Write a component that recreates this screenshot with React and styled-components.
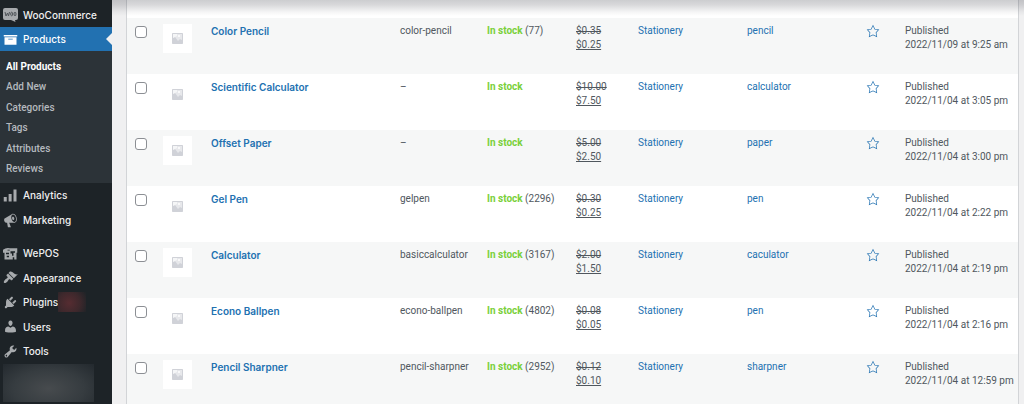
import React from "react";
import styled, { createGlobalStyle, css } from "styled-components";

const GlobalStyle = createGlobalStyle`
  *, *::before, *::after { box-sizing: border-box; }
  body {
    margin: 0;
    background: #f0f0f1;
    color: #50575e;
    font-family: Roboto, "Liberation Sans", sans-serif;
    font-size: 10px;
    line-height: 14px;
  }
  a { color: #2271b1; text-decoration: none; }
`;

const Page = styled.div`
  display: flex;
  height: 100vh;
  overflow: hidden;
`;

const Sidebar = styled.nav`
  flex: 0 0 112px;
  padding-top: 3px;
  background: #1d2327;
`;

const MenuGroup = styled.ul`
  display: flex;
  flex-direction: column;
  justify-content: space-between;
  min-height: ${(p) => p.$height}px;
  margin: 0 0 ${(p) => p.$after || 0}px;
  padding: 0;
  list-style: none;
`;

const MenuLink = styled.a`
  position: relative;
  display: flex;
  align-items: center;
  gap: 5px;
  height: 24px;
  padding-left: 3px;
  color: #f0f0f1;
  font-family: Inter, "Liberation Sans", sans-serif;
  font-size: 10px;
  font-weight: 500;
  white-space: nowrap;
  svg { flex: none; color: #a7aaad; }
  ${(p) =>
    p.$current &&
    css`
      background: #2271b1;
      color: #fff;
      svg { color: #fff; }
      &::after {
        content: "";
        position: absolute;
        top: 6px;
        right: 0;
        border: 6px solid transparent;
        border-left-width: 0;
        border-right-color: #f0f0f1;
      }
    `}
`;

const Submenu = styled.ul`
  display: flex;
  flex-direction: column;
  justify-content: space-between;
  min-height: 132px;
  margin: 0;
  padding: 6px 6px 4px;
  background: #2c3338;
  list-style: none;
`;

const SubLink = styled.a`
  display: block;
  color: ${(p) => (p.$current ? "#fff" : "#b4b9be")};
  font-weight: ${(p) => (p.$current ? 700 : 500)};
  line-height: 20px;
`;

const UpdateBadge = styled.span`
  width: 28px;
  height: 20px;
  margin-left: -5px;
  background: radial-gradient(circle at 40% 55%, #562c31, #3d282c 55%, #1d2327);
`;

const BlurredItem = styled.div`
  height: 38px;
  margin: 1px 18px 0 3px;
  background: radial-gradient(ellipse at 50% 65%, #474b4e, #363c40 55%, #23292e);
`;

const Main = styled.main`
  position: relative;
  flex: 1;
  min-width: 0;
  padding: 0 5px 0 14px;
`;

const TopShade = styled.div`
  position: absolute;
  inset: 0 0 auto;
  height: 16px;
  background: linear-gradient(rgba(60, 62, 72, 0.26), rgba(60, 62, 72, 0.2) 30%, rgba(60, 62, 72, 0.05) 75%, transparent);
`;

const ProductPanel = styled.div`
  min-height: 100%;
  padding-top: 18px;
  border: solid #d2d4d7;
  border-width: 0 1px;
  background: #fff;
`;

const ProductTable = styled.table`
  width: 100%;
  table-layout: fixed;
  border-collapse: collapse;
`;

const Col = styled.col`
  width: ${(p) => (p.$width ? `${p.$width}px` : "auto")};
`;

const Row = styled.tr`
  height: 56px;
  &:nth-child(odd) { background: #f6f7f7; }
`;

const Cell = styled.td`
  padding: ${(p) => p.$top || 6}px 0 0;
  vertical-align: top;
  white-space: nowrap;
`;

const Check = styled.input`
  appearance: none;
  display: block;
  width: 12px;
  height: 12px;
  margin: 0 0 0 8px;
  border: 1px solid #8c8f94;
  border-radius: 3px;
  background: #fff;
`;

const Thumb = styled.div`
  display: flex;
  align-items: center;
  justify-content: center;
  width: 29px;
  height: 29px;
  background: #fff;
  color: #d0d2d8;
`;

const ProductName = styled.a`
  font-family: Inter, "Liberation Sans", sans-serif;
  font-weight: 600;
`;

const Stock = styled.strong`
  color: #7ad03a;
  font-weight: 700;
`;

const Price = styled.div`
  display: flex;
  flex-direction: column;
  align-items: flex-start;
`;

const StarButton = styled.button`
  display: block;
  padding: 0;
  border: 0;
  background: none;
  color: #2271b1;
`;

const DashIcon = ({ d, size = 14 }) => (
  <svg width={size} height={size} viewBox="0 0 20 20" fill="currentColor" aria-hidden="true">
    <path d={d} fillRule="evenodd" />
  </svg>
);

const paths = {
  archive: "M19 4v2H1V4h18zM2 7h16v10H2V7zm11 3V9H7v1h6z",
  bars: "M1 12h4v6H1zM7.5 8h4v10h-4zM14 2h4v16h-4z",
  megaphone:
    "M18.15 5.94c.46 1.62.38 3.22-.02 4.48-.42 1.28-1.26 2.18-2.3 2.48-.16.06-.26.06-.4.06-.06.02-.12.02-.18.02-.06.02-.14.02-.22.02h-6.8l2.22 5.5c.02.14-.06.26-.14.34-.08.1-.24.16-.34.16H6.95c-.1 0-.26-.06-.34-.16-.08-.08-.16-.2-.14-.34l-1-5.5H4.25l-.02-.02c-.5.06-1.08-.18-1.54-.62s-.88-1.08-1.06-1.88c-.24-.8-.2-1.56-.02-2.2.18-.62.58-1.08 1.06-1.3l.02-.02 9-5.4c.1-.06.18-.1.24-.16.06-.04.14-.08.24-.12.16-.08.28-.12.5-.18 1.04-.3 2.24.1 3.22.98s1.84 2.24 2.26 3.86zm-2.58 5.98h-.02c.4-.1.74-.34 1.04-.7.58-.7.86-1.76.86-3.04 0-.64-.1-1.3-.28-1.98-.34-1.36-1.02-2.5-1.78-3.24s-1.68-1.1-2.46-.88c-.82.22-1.4.96-1.7 2-.32 1.04-.28 2.36.06 3.72.38 1.36 1 2.5 1.8 3.24.78.74 1.62 1.1 2.48.88zm-2.54-7.08c.22-.04.42-.02.62.04.38.16.76.48 1.02 1s.42 1.2.42 1.78c0 .3-.04.56-.12.8-.18.48-.44.84-.86.94-.34.1-.8-.06-1.14-.4s-.64-.86-.78-1.5c-.18-.62-.12-1.24.02-1.72s.48-.84.82-.94z",
  pos: "M0 5q4-3 9-2h10v6h-1v9h-3v-3h-2v3H2V9H0zM6 5v1h3V5zM4 9v2h4V9zM10 7v3h2v3h2V9h2V7zM5 13v2h3v-2z",
  brush:
    "M14.48 11.06L7.41 3.99l1.5-1.5c.5-.56 2.3-.47 3.51.32 1.21.8 1.43 1.28 2.91 2.1 1.18.64 2.45 1.26 4.45.85zm-.71.71L6.7 4.7 4.93 6.47c-.39.39-.39 1.02 0 1.41l1.06 1.06c.39.39.39 1.03 0 1.42-.6.6-1.43 1.11-2.21 1.69-.35.26-.7.53-1.01.84C1.43 14.23.4 16.08 1.4 17.07c.99 1 2.84-.03 4.18-1.36.31-.31.58-.66.85-1.02.57-.78 1.08-1.61 1.69-2.21.39-.39 1.02-.39 1.41 0l1.06 1.06c.39.39 1.02.39 1.41 0z",
  plug: "M13.11 4.36L9.87 7.6 8 5.73l3.24-3.24c.35-.34 1.05-.2 1.56.32.52.51.66 1.21.31 1.55zm-8 1.77l.91-1.12 9.01 9.01-1.19.84c-.71.71-2.63 1.16-3.82 1.16H6.14L4.9 17.26c-.59.59-1.54.59-2.12 0-.59-.58-.59-1.53 0-2.12l1.24-1.24v-3.88c0-1.13.4-3.19 1.09-3.89zm7.26 3.97l3.24-3.24c.34-.35 1.04-.21 1.55.31.52.51.66 1.21.31 1.55l-3.24 3.25z",
  user: "M10 9.25c-2.27 0-2.73-3.44-2.73-3.44C7 4.02 7.82 2 9.97 2c2.16 0 2.98 2.02 2.71 3.81 0 0-.41 3.44-2.68 3.44zm0 2.57L12.72 10c2.39 0 4.52 2.33 4.52 4.53v2.49s-3.65 1.13-7.24 1.13c-3.65 0-7.24-1.13-7.24-1.13v-2.49c0-2.25 1.94-4.48 4.47-4.48z",
  wrench:
    "M16.68 9.77c-1.34 1.34-3.3 1.67-4.95.99l-5.41 6.52c-.99.99-2.59.99-3.58 0s-.99-2.59 0-3.57l6.52-5.42c-.68-1.65-.35-3.61.99-4.95 1.28-1.28 3.12-1.62 4.72-1.06l-2.89 2.89 2.82 2.82 2.86-2.87c.53 1.58.18 3.39-1.08 4.65zM3.81 16.21c.4.39 1.04.39 1.43 0 .4-.4.4-1.04 0-1.43-.39-.4-1.03-.4-1.43 0-.39.39-.39 1.03 0 1.43z",
  star: "M10 1L7 7l-6 .75 4.13 4.62L4 19l6-3 6 3-1.12-6.63L19 7.75 13 7zm0 2.24l2.34 4.69 4.65.58-3.18 3.56.87 5.15L10 14.88l-4.68 2.34.87-5.15-3.18-3.56 4.65-.58z",
};

const WooIcon = () => (
  <svg width="15" height="14" viewBox="0 0 15 14" aria-hidden="true">
    <path d="M2 0h11q2 0 2 2v8q0 2-2 2h-1l.5 2L8 12H2q-2 0-2-2V2q0-2 2-2z" fill="#a7aaad" />
    <path d="M2 4l1 4 1.500-3 1 3 1-4" fill="none" stroke="#50555a" strokeWidth="1" />
    <ellipse cx="8.700" cy="6" rx="1" ry="1.800" fill="none" stroke="#50555a" strokeWidth="1" />
    <ellipse cx="12" cy="6" rx="1" ry="1.800" fill="none" stroke="#50555a" strokeWidth="1" />
  </svg>
);

const PlaceholderImage = () => (
  <svg width="11" height="11" viewBox="0 0 11 11" fill="currentColor" aria-hidden="true">
    <rect width="11" height="11" rx="1" opacity="0.5" />
    <path
      fillRule="evenodd"
      d="M1 0h9q1 0 1 1v9q0 1-1 1H1q-1 0-1-1V1q0-1 1-1zM1 1v4l2-1 3 4 2-2 2 1V1z"
    />
    <circle cx="7" cy="3" r="1" fill="#fff" />
    <path d="M1 1h4v2L3 4 1 5z" fill="#fff" opacity="0.6" />
  </svg>
);

const submenu = ["All Products", "Add New", "Categories", "Tags", "Attributes", "Reviews"];

const products = [
  { name: "Color Pencil", sku: "color-pencil", qty: 77, was: "$0.35", now: "$0.25", tag: "pencil", date: "2022/11/09 at 9:25 am" },
  { name: "Scientific Calculator", sku: "–", was: "$10.00", now: "$7.50", tag: "calculator", date: "2022/11/04 at 3:05 pm" },
  { name: "Offset Paper", sku: "–", was: "$5.00", now: "$2.50", tag: "paper", date: "2022/11/04 at 3:00 pm" },
  { name: "Gel Pen", sku: "gelpen", qty: 2296, was: "$0.30", now: "$0.25", tag: "pen", date: "2022/11/04 at 2:22 pm" },
  { name: "Calculator", sku: "basiccalculator", qty: 3167, was: "$2.00", now: "$1.50", tag: "caculator", date: "2022/11/04 at 2:19 pm" },
  { name: "Econo Ballpen", sku: "econo-ballpen", qty: 4802, was: "$0.08", now: "$0.05", tag: "pen", date: "2022/11/04 at 2:16 pm" },
  { name: "Pencil Sharpner", sku: "pencil-sharpner", qty: 2952, was: "$0.12", now: "$0.10", tag: "sharpner", date: "2022/11/04 at 12:59 pm" },
];

const columns = [36, 48, 0, 87, 89, 62, 109, 119, 39, 113];

const MenuItem = ({ icon, label, current, children }) => (
  <li>
    <MenuLink href="#" $current={current}>
      {icon === "woo" ? <WooIcon /> : <DashIcon d={paths[icon]} size={15} />}
      {label}
      {children}
    </MenuLink>
  </li>
);

export default function App() {
  return (
    <Page>
      <GlobalStyle />
      <Sidebar aria-label="Main menu">
        <MenuGroup $height={48}>
          <MenuItem icon="woo" label="WooCommerce" />
          <MenuItem icon="archive" label="Products" current />
        </MenuGroup>
        <Submenu>
          {submenu.map((label, i) => (
            <li key={label}>
              <SubLink href="#" $current={i === 0}>{label}</SubLink>
            </li>
          ))}
        </Submenu>
        <MenuGroup $height={49} $after={9}>
          <MenuItem icon="bars" label="Analytics" />
          <MenuItem icon="megaphone" label="Marketing" />
        </MenuGroup>
        <MenuGroup $height={122}>
          <MenuItem icon="pos" label="WePOS" />
          <MenuItem icon="brush" label="Appearance" />
          <MenuItem icon="plug" label="Plugins"><UpdateBadge /></MenuItem>
          <MenuItem icon="user" label="Users" />
          <MenuItem icon="wrench" label="Tools" />
        </MenuGroup>
        <BlurredItem />
      </Sidebar>
      <Main>
        <ProductPanel>
          <ProductTable>
            <colgroup>
              {columns.map((width, i) => <Col key={i} $width={width} />)}
            </colgroup>
            <tbody>
              {products.map((p) => (
                <Row key={p.name}>
                  <Cell $top={8}><Check type="checkbox" aria-label={`Select ${p.name}`} /></Cell>
                  <Cell><Thumb><PlaceholderImage /></Thumb></Cell>
                  <Cell><ProductName href="#">{p.name}</ProductName></Cell>
                  <Cell>{p.sku}</Cell>
                  <Cell><Stock>In stock</Stock>{p.qty ? ` (${p.qty})` : ""}</Cell>
                  <Cell><Price><del>{p.was}</del><ins>{p.now}</ins></Price></Cell>
                  <Cell><a href="#">Stationery</a></Cell>
                  <Cell><a href="#">{p.tag}</a></Cell>
                  <Cell>
                    <StarButton type="button" aria-label={`Feature ${p.name}`}>
                      <DashIcon d={paths.star} />
                    </StarButton>
                  </Cell>
                  <Cell>Published<br />{p.date}</Cell>
                </Row>
              ))}
            </tbody>
          </ProductTable>
        </ProductPanel>
        <TopShade />
      </Main>
    </Page>
  );
}
